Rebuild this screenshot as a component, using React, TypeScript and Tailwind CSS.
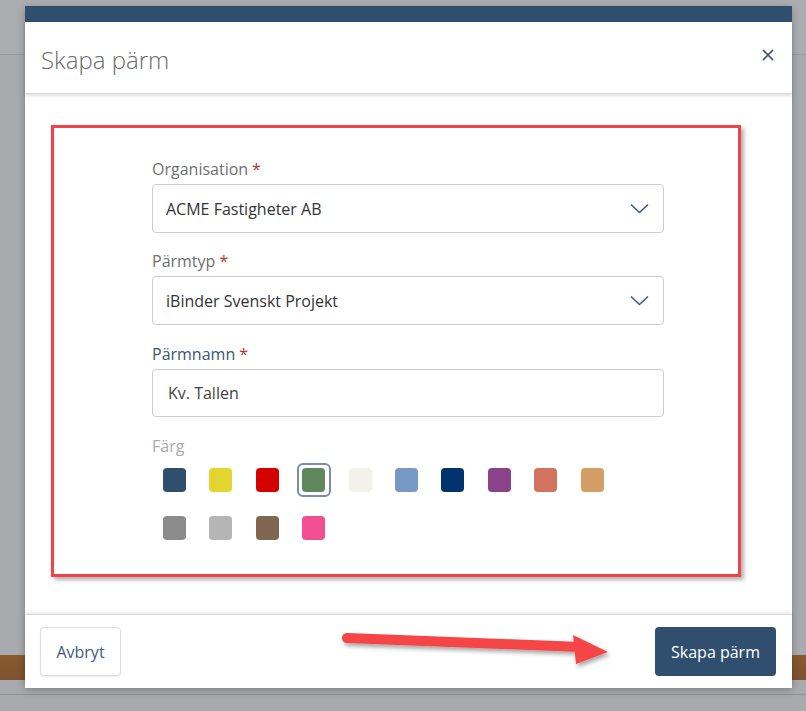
import React from "react";

const COLORS = [
  ["#2f4f6f", "#e3d42e", "#d40000", "#61875c", "#f3f1ec", "#7899c4", "#00336e", "#8a438b", "#d47260", "#d59d66"],
  ["#8c8c8c", "#b5b5b5", "#806650", "#f24f92"],
];
const SELECTED = "#61875c";

function Chevron() {
  return (
    <svg width="19" height="11" viewBox="0 0 19 11" fill="none">
      <polyline points="1,1.5 9.5,9.5 18,1.5" stroke="#3d5a80" strokeWidth="1.6" strokeLinejoin="round" />
    </svg>
  );
}

function Label({ text, required, tone = "text-[#6f6f6f]" }: { text: string; required?: boolean; tone?: string }) {
  return (
    <div className={`h-[20px] text-[16px] leading-[20px] ${tone}`}>
      {text}
      {required && <span className="ml-1 text-[#b5372b]">*</span>}
    </div>
  );
}

function Select({ value }: { value: string }) {
  return (
    <div className="mt-[5px] flex h-[49px] items-center justify-between rounded-[4px] border border-[#cccccc] bg-white pl-[13px] pr-[14px] text-[16px] text-[#333]">
      <span>{value}</span>
      <Chevron />
    </div>
  );
}

function Swatch({ color }: { color: string }) {
  const selected = color === SELECTED;
  return (
    <div className="flex h-[24px] w-[23px] items-center justify-center">
      {selected ? (
        <div className="flex h-[34px] w-[34px] shrink-0 items-center justify-center rounded-[6px] border-2 border-[#7a8fa6]">
          <div className="h-[24px] w-[23px] rounded-[4px]" style={{ background: color }} />
        </div>
      ) : (
        <div className="h-[24px] w-[23px] rounded-[4px]" style={{ background: color }} />
      )}
    </div>
  );
}

export default function App() {
  return (
    <div className="relative h-[711px] w-[806px] overflow-hidden bg-[#a9aaae] font-['Open_Sans',sans-serif]">
      {/* page behind the overlay */}
      <div className="h-[55px] border-b border-[#96979b] bg-[#acadb1]" />
      <div className="h-[600px]" />
      <div className="h-[25px] bg-gradient-to-b from-[#8a5a2e] to-[#7d5430]" />
      <div className="h-[15px] border-b border-[#8f9094] bg-[#a9aaae]" />

      {/* modal */}
      <div className="absolute left-[25px] top-[6px] flex h-[682px] w-[767px] flex-col bg-white shadow-[0_2px_8px_rgba(0,0,0,0.25)]">
        <div className="h-[16px] bg-[#304f6f]" />
        <div className="relative z-10 flex h-[72px] items-center justify-between border-b border-[#dcdcdc] pl-[16px] pr-[18px] shadow-[0_2px_3px_rgba(0,0,0,0.12)]">
          <h1 className="pt-[4px] text-[24px] font-light text-[#6a6a6a]">Skapa pärm</h1>
          <svg width="12" height="12" viewBox="0 0 12 12" className="mb-[6px]">
            <path d="M1 1 L11 11 M11 1 L1 11" stroke="#34506e" strokeWidth="1.7" />
          </svg>
        </div>

        <div className="flex-1 pl-[26px] pt-[31px]">
          <div className="h-[452px] w-[690px] border-[3px] border-[#f04446] pl-[98px] pt-[31px] shadow-[3px_3px_4px_rgba(0,0,0,0.3)]">
            <div className="w-[512px]">
              <Label text="Organisation" required />
              <Select value="ACME Fastigheter AB" />
              <div className="mt-[18px]">
                <Label text="Pärmtyp" required />
                <Select value="iBinder Svenskt Projekt" />
              </div>
              <div className="mt-[19px]">
                <Label text="Pärmnamn" required tone="text-[#3a5675]" />
                <div className="mt-[5px] flex h-[48px] items-center rounded-[4px] border border-[#cccccc] pl-[15px] text-[16px] text-[#444]">
                  Kv. Tallen
                </div>
              </div>
              <div className="mt-[19px]">
                <Label text="Färg" tone="text-[#a9a9a9]" />
                <div className="ml-[11px] mt-[12px] flex flex-col gap-y-[24px]">
                  {COLORS.map((row, r) => (
                    <div key={r} className="flex gap-x-[23.4px]">
                      {row.map((c) => (
                        <Swatch key={c} color={c} />
                      ))}
                    </div>
                  ))}
                </div>
              </div>
            </div>
          </div>
        </div>

        <div className="flex h-[74px] items-start justify-between border-t border-[#d8d8d8] pl-[15px] pr-[16px] pt-[12px] shadow-[0_-2px_3px_rgba(0,0,0,0.08)]">
          <button className="h-[49px] w-[81px] rounded-[4px] border border-[#dddddd] bg-white text-[16px] text-[#3d5a80] shadow-[0_1px_2px_rgba(0,0,0,0.08)]">
            Avbryt
          </button>
          <button className="h-[49px] w-[121px] rounded-[4px] bg-[#304f6f] text-[16px] text-white">
            Skapa pärm
          </button>
        </div>
      </div>

      {/* annotation arrow */}
      <svg className="absolute left-[335px] top-[625px]" width="290" height="50" viewBox="0 0 290 50">
        <defs>
          <filter id="sh" x="-10%" y="-50%" width="120%" height="200%">
            <feDropShadow dx="2" dy="3" stdDeviation="2" floodColor="#000" floodOpacity="0.35" />
          </filter>
        </defs>
        <g filter="url(#sh)" fill="#f54447">
          <path d="M12 13 L246 22" stroke="#f54447" strokeWidth="10" strokeLinecap="round" />
          <polygon points="238,10 273,27 241,39" />
        </g>
      </svg>
    </div>
  );
}
